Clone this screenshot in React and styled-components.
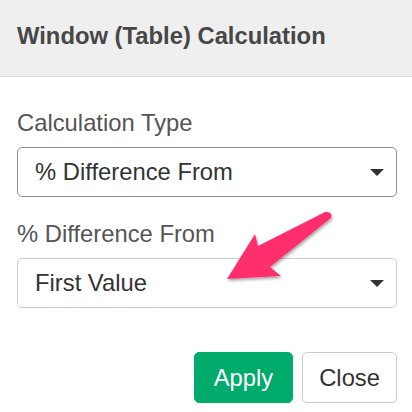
import React from 'react'
import styled, { createGlobalStyle } from 'styled-components'

const GlobalStyle = createGlobalStyle`
  html, body {
    margin: 0;
    padding: 0;
    background: #fff;
    font-family: "Liberation Sans", Arial, Helvetica, sans-serif;
  }
`

function Select({ value, dark }) {
  return (
    <SelectBox dark={dark}>
      <SelectText>{value}</SelectText>
      <Caret />
    </SelectBox>
  )
}

function Arrow() {
  return (
    <ArrowWrap>
      <svg width="412" height="412" viewBox="0 0 412 412">
        <defs>
          <filter id="shadow" x="-20%" y="-20%" width="140%" height="160%">
            <feDropShadow dx="1" dy="2" stdDeviation="1.5" floodColor="#000" floodOpacity="0.35" />
          </filter>
        </defs>
        <path
          d="M325,212 Q333,211 331,218 L270,267 L281,276 L227,279 L255,234 L258,246 Z"
          fill="#ff2e6c"
          strokeLinejoin="round"
          filter="url(#shadow)"
        />
      </svg>
    </ArrowWrap>
  )
}

export default function App() {
  return (
    <Page>
      <GlobalStyle />
      <Header>
        <Title>Window (Table) Calculation</Title>
      </Header>
      <Body>
        <Group>
          <Label>Calculation Type</Label>
          <Select value="% Difference From" dark />
        </Group>
        <Group>
          <Label>% Difference From</Label>
          <Select value="First Value" />
        </Group>
      </Body>
      <Footer>
        <Button primary>Apply</Button>
        <Button>Close</Button>
      </Footer>
      <Arrow />
    </Page>
  )
}

const Page = styled.div`
  position: relative;
  width: 412px;
  height: 412px;
  overflow: hidden;
  background: #fff;
`
const Header = styled.div`
  background: #efefef;
  border-bottom: 1px solid #dedede;
  padding: 19px 17px 23px;
`
const Title = styled.div`
  font-size: 23.8px;
  line-height: 34px;
  font-weight: bold;
  color: #474747;
`
const Body = styled.div`
  padding: 29px 15px 0 17px;
  display: flex;
  flex-direction: column;
  gap: 20px;
`
const Group = styled.div`
  display: flex;
  flex-direction: column;
  gap: 7px;
`
const Label = styled.div`
  font-size: 23.8px;
  line-height: 34px;
  color: #555;
`
const SelectBox = styled.div`
  height: 48px;
  border: 1px solid ${p => (p.dark ? '#8e8e8e' : '#cccccc')};
  border-radius: 5px;
  display: flex;
  align-items: center;
  justify-content: space-between;
  padding: 0 12px 0 17px;
`
const SelectText = styled.span`
  font-size: 23.8px;
  color: #333;
`
const Caret = styled.span`
  width: 0;
  height: 0;
  border-left: 7px solid transparent;
  border-right: 7px solid transparent;
  border-top: 7px solid #333;
`
const Footer = styled.div`
  display: flex;
  justify-content: flex-end;
  gap: 9px;
  padding: 44px 15px 0 17px;
`
const Button = styled.div`
  height: 49px;
  padding: 0 ${p => (p.primary ? '19px' : '16px')};
  border: 1px solid ${p => (p.primary ? '#00ab6b' : '#cccccc')};
  background: ${p => (p.primary ? '#00ab6b' : '#fff')};
  color: ${p => (p.primary ? '#fff' : '#333')};
  border-radius: 5px;
  font-size: 23.8px;
  display: flex;
  align-items: center;
`
const ArrowWrap = styled.div`
  position: absolute;
  left: 0;
  top: 0;
  pointer-events: none;
`
